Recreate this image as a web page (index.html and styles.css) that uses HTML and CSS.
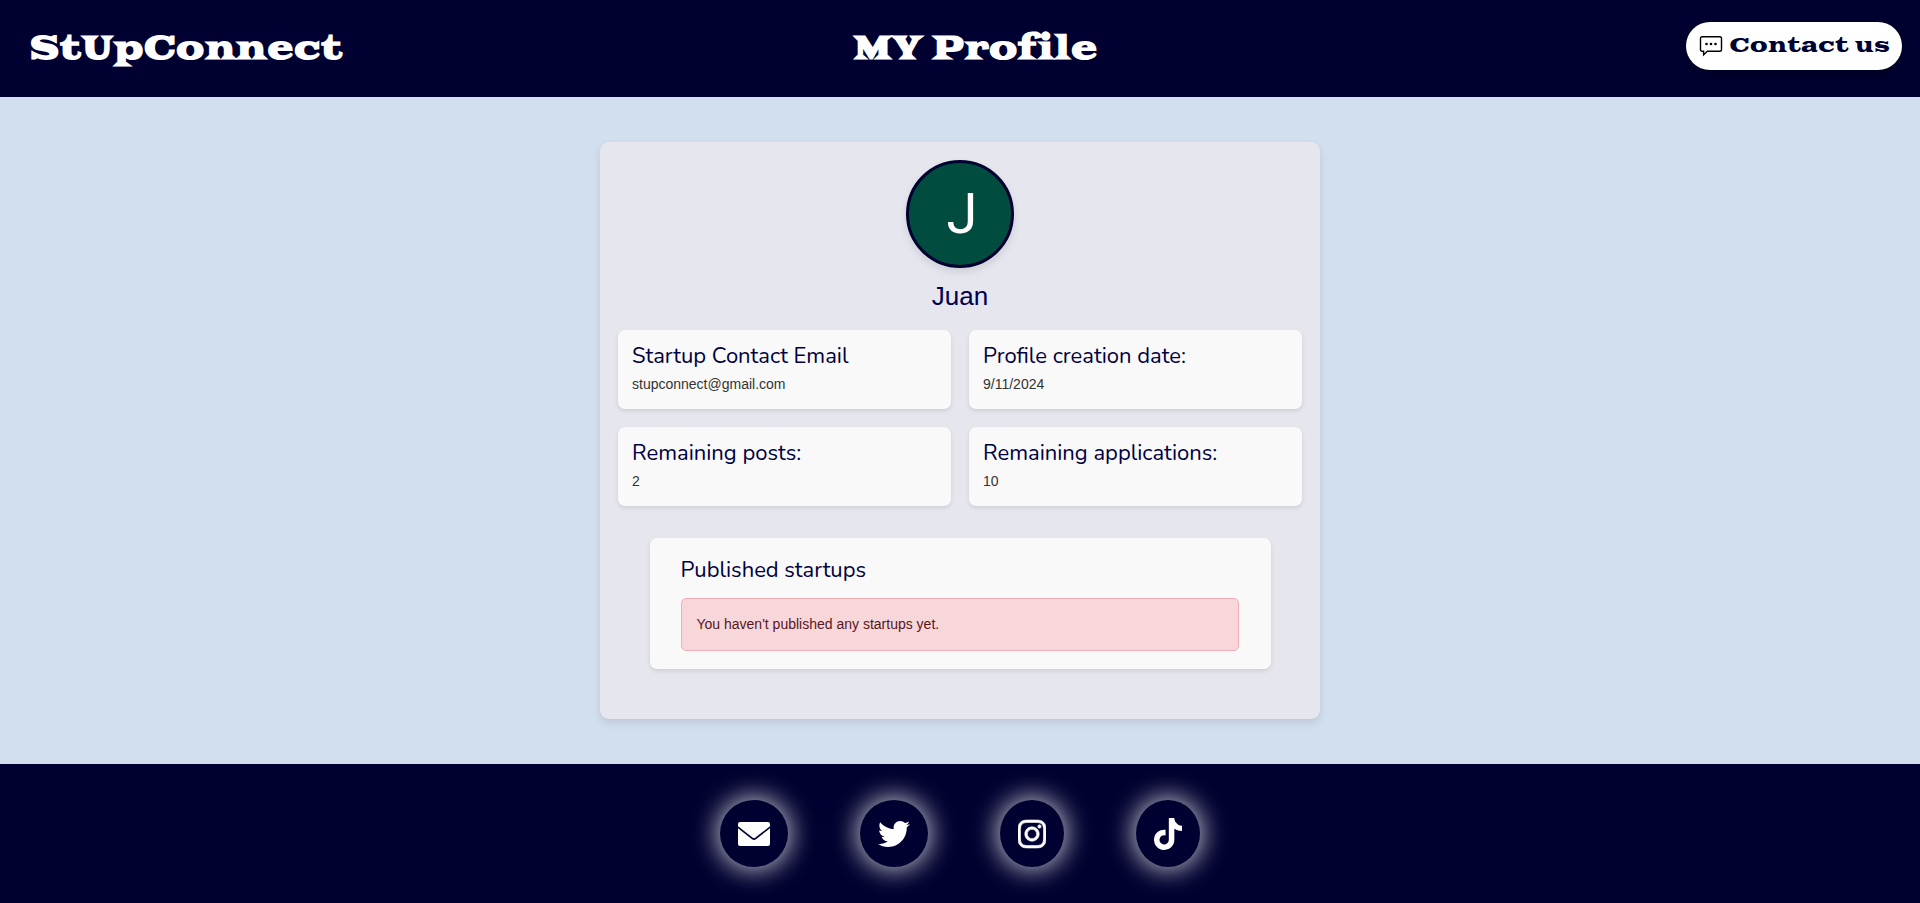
FILE: index.html
```html
<!DOCTYPE html>
<html lang="en">
<head>
<meta charset="utf-8">
<title>My Profile - StUpConnect</title>
<link rel="stylesheet" href="styles.css">
</head>
<body>
<header class="site-header">
  <a class="brand" href="#">StUpConnect</a>
  <h1 class="page-title">MY Profile</h1>
  <button class="contact" type="button">
    <svg class="contact-icon" viewBox="0 0 24 24" fill="none" stroke="#000" stroke-width="1.4" aria-hidden="true"><path d="M3 2.700h18a1.500 1.500 0 0 1 1.500 1.500v11.500a1.500 1.500 0 0 1-1.500 1.500H8.300L4.600 20.900V17.200H3a1.500 1.500 0 0 1-1.500-1.500V4.200A1.500 1.500 0 0 1 3 2.700z"/><g fill="#000" stroke="none"><circle cx="7.500" cy="10" r="1.300"/><circle cx="12" cy="10" r="1.300"/><circle cx="16.500" cy="10" r="1.300"/></g></svg>
    <span>Contact us</span>
  </button>
</header>
<main class="content">
  <section class="profile">
    <div class="avatar">J</div>
    <h2 class="name">Juan</h2>
    <div class="facts">
      <article class="card"><h3>Startup Contact Email</h3><p>stupconnect@gmail.com</p></article>
      <article class="card"><h3>Profile creation date:</h3><p>9/11/2024</p></article>
      <article class="card"><h3>Remaining posts:</h3><p>2</p></article>
      <article class="card"><h3>Remaining applications:</h3><p>10</p></article>
    </div>
    <section class="card published">
      <h3>Published startups</h3>
      <div class="alert" role="alert">You haven't published any startups yet.</div>
    </section>
  </section>
</main>
<footer class="site-footer">
  <a class="social" href="#" aria-label="Email"><svg viewBox="0 0 32 32"><path d="M2 4h28a2 2 0 0 1 2 2v2.200L17.200 19.700a2 2 0 0 1-2.400 0L0 8.200V6a2 2 0 0 1 2-2zM0 10.200l14 11a3.200 3.200 0 0 0 4 0l14-11V26a2 2 0 0 1-2 2H2a2 2 0 0 1-2-2z"/></svg></a>
  <a class="social" href="#" aria-label="Twitter"><svg viewBox="0 0 512 512"><path d="M459.370 151.716c.325 4.548.325 9.097.325 13.645 0 138.720-105.583 298.558-298.558 298.558-59.452 0-114.680-17.219-161.137-47.106 8.447.974 16.568 1.299 25.340 1.299 49.055 0 94.213-16.568 130.274-44.832-46.132-.975-84.792-31.188-98.112-72.772 6.498.974 12.995 1.624 19.818 1.624 9.421 0 18.843-1.300 27.614-3.573-48.081-9.747-84.143-51.980-84.143-102.985v-1.299c13.969 7.797 30.214 12.670 47.431 13.319-28.264-18.843-46.781-51.005-46.781-87.391 0-19.492 5.197-37.360 14.294-52.954 51.655 63.675 129.300 105.258 216.365 109.807-1.624-7.797-2.599-15.918-2.599-24.040 0-57.828 46.782-104.934 104.934-104.934 30.213 0 57.502 12.670 76.670 33.137 23.715-4.548 46.456-13.320 66.599-25.340-7.798 24.366-24.366 44.833-46.132 57.827 21.117-2.273 41.584-8.122 60.426-16.243-14.292 20.791-32.161 39.308-52.628 54.253z"/></svg></a>
  <a class="social" href="#" aria-label="Instagram"><svg class="narrow" viewBox="0 0 448 512"><path stroke="#fff" stroke-width="10" d="M224.100 141c-63.600 0-114.900 51.300-114.900 114.900s51.300 114.900 114.900 114.900S339 319.500 339 255.900 287.700 141 224.100 141zm0 189.600c-41.100 0-74.700-33.500-74.700-74.700s33.500-74.700 74.700-74.700 74.700 33.500 74.700 74.700-33.600 74.700-74.700 74.700zm146.400-194.300c0 14.900-12 26.800-26.800 26.800-14.900 0-26.800-12-26.800-26.800s12-26.800 26.800-26.800 26.800 12 26.800 26.800zm76.100 27.200c-1.700-35.900-9.900-67.700-36.200-93.900-26.200-26.200-58-34.400-93.900-36.200-37-2.100-147.900-2.100-184.900 0-35.800 1.700-67.600 9.900-93.900 36.100s-34.400 58-36.200 93.900c-2.100 37-2.100 147.900 0 184.900 1.700 35.900 9.900 67.700 36.200 93.900s58 34.400 93.900 36.200c37 2.100 147.900 2.100 184.900 0 35.900-1.700 67.700-9.900 93.900-36.200 26.200-26.200 34.400-58 36.200-93.900 2.100-37 2.100-147.800 0-184.800zM398.800 388c-7.800 19.600-22.900 34.700-42.600 42.600-29.500 11.700-99.500 9-132.100 9s-102.700 2.600-132.100-9c-19.600-7.800-34.700-22.900-42.600-42.600-11.700-29.500-9-99.500-9-132.100s-2.600-102.700 9-132.100c7.800-19.600 22.900-34.700 42.600-42.600 29.500-11.700 99.500-9 132.100-9s102.700-2.600 132.100 9c19.600 7.800 34.700 22.900 42.600 42.600 11.700 29.500 9 99.500 9 132.100s2.700 102.700-9 132.100z"/></svg></a>
  <a class="social" href="#" aria-label="TikTok"><svg class="narrow" viewBox="0 0 448 512"><path d="M448 209.900a210.100 210.100 0 0 1-122.800-39.300v178.800A162.600 162.600 0 1 1 185 188.300v89.900a74.600 74.600 0 1 0 52.200 71.200V0h88a121.200 121.200 0 0 0 1.900 22.200A122.200 122.200 0 0 0 381 102.400a121.400 121.400 0 0 0 67 20.100z"/></svg></a>
</footer>
</body>
</html>
```
FILE: styles.css
```css
* { box-sizing: border-box; }
body {
  margin: 0;
  min-height: 100vh;
  display: flex;
  flex-direction: column;
  background: #d2dfee;
  color: #333;
  font: 14px/21px "Liberation Sans", Arial, sans-serif;
}
h1, h2, h3, p { margin: 0; font-weight: 400; }
.site-header {
  display: grid;
  grid-template-columns: 1fr auto 1fr;
  align-items: center;
  min-height: 97px;
  padding: 0 18px 0 29px;
  background: #000130;
  color: #fff;
}
.brand, .page-title {
  color: #fff;
  font: 700 32px/48px "Goblin One", "DejaVu Serif", serif;
  text-decoration: none;
}
.page-title { margin-left: 20px; }
.contact {
  justify-self: end;
  display: flex;
  align-items: center;
  gap: 7px;
  height: 48px;
  margin-bottom: 5px;
  padding: 0 12px 0 13px;
  border: 0;
  border-radius: 24px;
  background: #fff;
  color: #000130;
  font: 400 20px/32px "Goblin One", "DejaVu Serif", serif;
  box-shadow: 0 4px 8px rgba(0, 0, 0, 0.3);
}
.contact-icon { width: 24px; height: 24px; }
.content { flex: 1; padding: 45px 16px; }
.profile {
  display: flex;
  flex-direction: column;
  align-items: center;
  max-width: 720px;
  margin: 0 auto;
  padding: 18px 18px 50px;
  border-radius: 9px;
  background: #e5e6ee;
  box-shadow: 0 4px 8px rgba(0, 0, 0, 0.1);
}
.avatar {
  display: grid;
  place-items: center;
  width: 108px;
  height: 108px;
  padding-left: 4px;
  border: 3px solid #000130;
  border-radius: 50%;
  background: #004d40;
  color: #fff;
  font: 56px/64px Roboto, sans-serif;
  box-shadow: 0 4px 8px rgba(0, 0, 0, 0.1);
}
.name {
  margin: 12px 0 18px;
  color: #000050;
  font-size: 26px;
  line-height: 32px;
}
.facts {
  display: grid;
  grid-template-columns: 1fr 1fr;
  gap: 18px;
  width: 100%;
}
.card {
  padding: 14px;
  border-radius: 7px;
  background: #f9f9f9;
  box-shadow: 0 2px 4px rgba(0, 0, 0, 0.1);
}
.card h3 {
  margin-bottom: 5px;
  color: #000040;
  font: 400 22px/25px Nunito, Lato, sans-serif;
}
.published {
  width: calc(100% - 63px);
  margin-top: 32px;
  padding: 20px 32px 18px 31px;
}
.published h3 { margin-bottom: 15px; }
.alert {
  padding: 15px;
  border: 1px solid #f1aeb5;
  border-radius: 5px;
  background: #f8d7da;
  color: #58151c;
}
.site-footer {
  display: flex;
  justify-content: center;
  align-items: center;
  gap: 72px;
  min-height: 139px;
  background: #000130;
}
.social {
  display: flex;
  align-items: center;
  height: 67px;
  padding: 0 18px;
  border-radius: 50%;
  background: #000130;
  box-shadow: 0 0 27px 2px rgba(255, 255, 255, 0.8);
}
.social svg { width: 32px; height: 32px; fill: #fff; }
.social .narrow { width: 28px; }
```
